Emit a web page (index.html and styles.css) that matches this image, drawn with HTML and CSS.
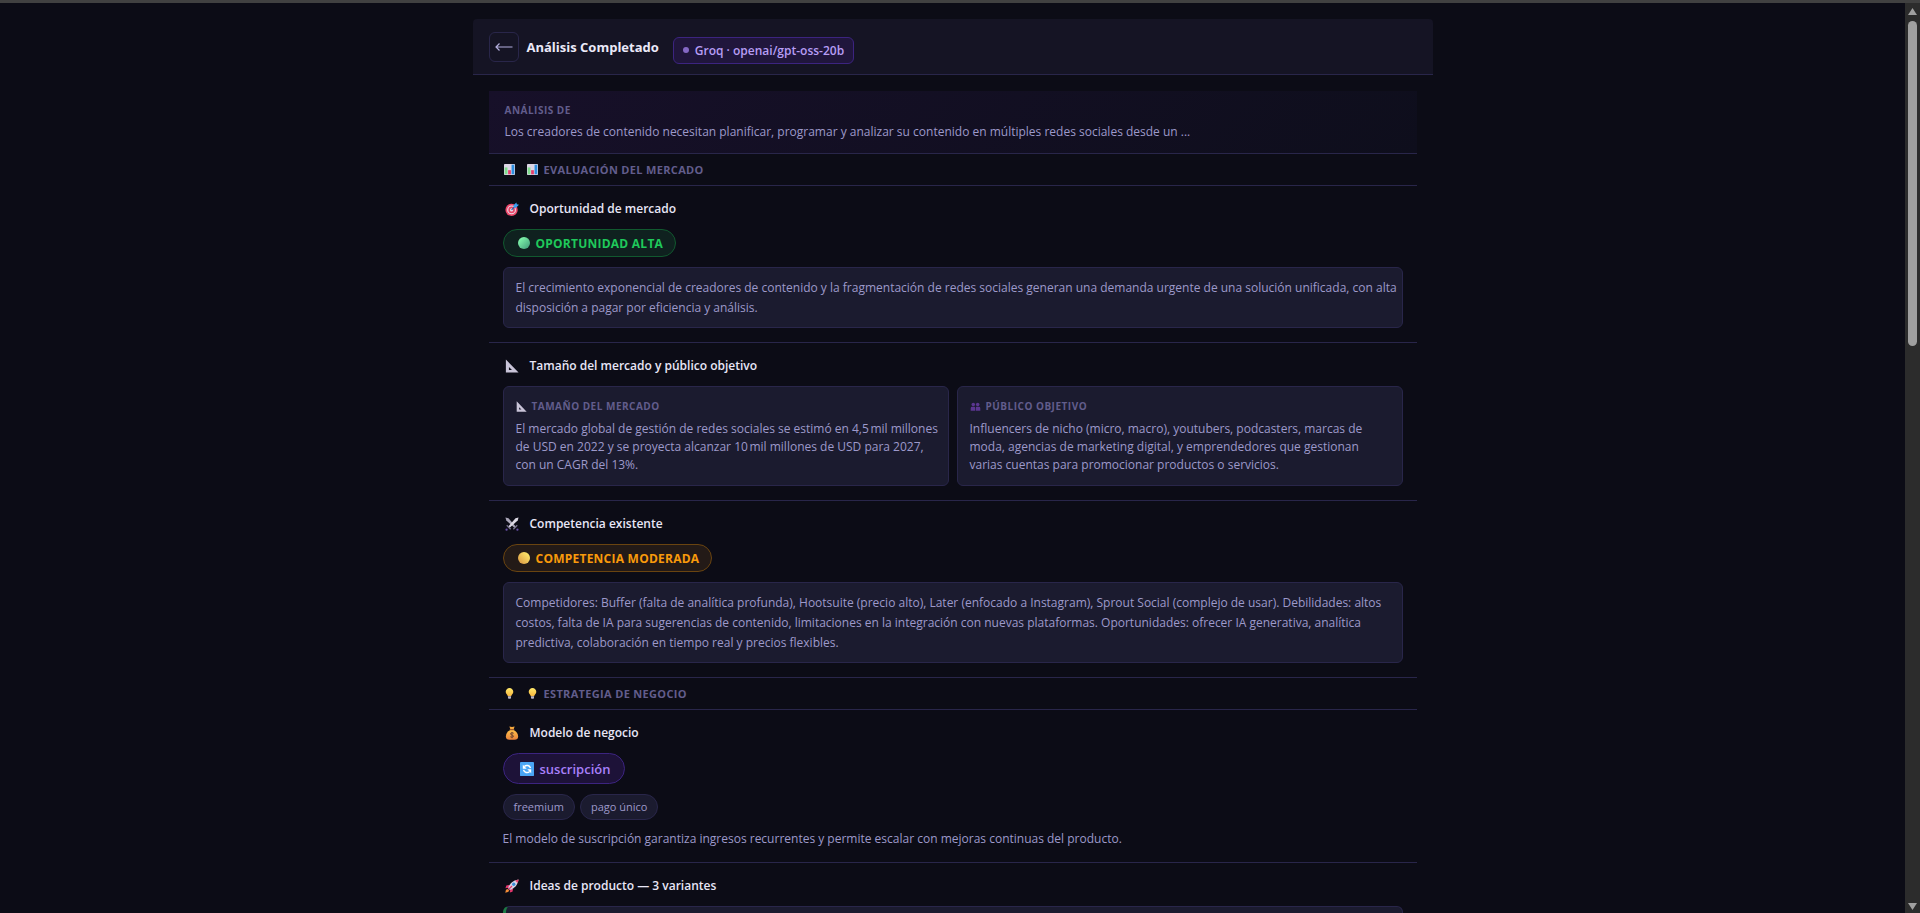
FILE: index.html
```html
<!DOCTYPE html>
<html lang="es">
<head>
  <meta charset="UTF-8" />
  <title>Análisis Completado</title>
  <meta name="viewport" content="width=device-width, initial-scale=1" />
  <link rel="stylesheet" href="styles.css">
</head>
<body>

  <!-- Icon set -->
  <svg class="icon-defs" aria-hidden="true">
    <defs>
      <linearGradient id="gGreen" x1="0" y1="0" x2="1" y2="1">
        <stop offset="0.2" stop-color="#7df0a8" />
        <stop offset="1" stop-color="#3f9a78" />
      </linearGradient>
      <linearGradient id="gYellow" x1="1" y1="0" x2="0" y2="1">
        <stop offset="0.1" stop-color="#fdea6c" />
        <stop offset="0.9" stop-color="#dc9c45" />
      </linearGradient>
      <linearGradient id="gBulb" x1="0" y1="0" x2="0" y2="1">
        <stop offset="0" stop-color="#ffe96b" />
        <stop offset="1" stop-color="#f7b53e" />
      </linearGradient>
      <linearGradient id="gBag" x1="0" y1="0" x2="0" y2="1">
        <stop offset="0" stop-color="#ffc24a" />
        <stop offset="1" stop-color="#e8823c" />
      </linearGradient>
      <symbol id="chart" viewBox="0 0 16 16">
        <rect width="16" height="16" rx="1" fill="#ddd6e6" />
        <rect x="1" y="5" width="4" height="10" fill="#7fdc8c" />
        <rect x="6" y="9" width="4" height="6" fill="#e63e6d" />
        <rect x="11" y="1" width="4" height="14" fill="#2e8fe0" />
      </symbol>
      <symbol id="target" viewBox="0 0 16 16">
        <circle cx="7.5" cy="9" r="7" fill="#ee4a6c" />
        <circle cx="7.5" cy="9" r="5" fill="#e9dbe8" />
        <circle cx="7.5" cy="9" r="3.8" fill="#e64668" />
        <circle cx="7.5" cy="9" r="1.8" fill="#e9dbe8" />
        <path d="M7.5 9 12 4.5" stroke="#1d5fb0" stroke-width="1.2" />
        <path d="M9.5 4 13 0.5 13.5 2.5 16 3 12.5 6.500 10 6Z" fill="#3aa0f2" />
      </symbol>
      <symbol id="ruler" viewBox="0 0 16 16">
        <path fill-rule="evenodd" d="M1 0.5 15.5 15.5H1ZM4.500 9V12.500H8Z" fill="#c9c4d8" />
      </symbol>
      <symbol id="people" viewBox="0 0 16 16">
        <circle cx="4.800" cy="5" r="2.600" fill="#5b3690" />
        <circle cx="11.200" cy="5" r="2.600" fill="#5b3690" />
        <path d="M1 14V10.500Q1 8.500 3 8.500H6.500Q7.500 8.500 7.500 10V14ZM8.500 14V10Q8.500 8.500 9.500 8.500H13Q15 8.500 15 10.500V14Z" fill="#5b3690" />
      </symbol>
      <symbol id="swords" viewBox="0 0 16 16">
        <path d="M0.5 0.5 4 1.500 12.500 11 11 12.500 1.500 4Z" fill="#aaa6b8" />
        <path d="M15.500 0.500 12 1.500 3.500 11 5 12.500 14.500 4Z" fill="#dcd9e4" />
        <path d="M2 9.500 6.500 14M14 9.500 9.500 14" stroke="#77728c" stroke-width="1.600" />
        <circle cx="1.800" cy="14.500" r="1.300" fill="#6950a8" />
        <circle cx="14.200" cy="14.500" r="1.300" fill="#6950a8" />
      </symbol>
      <symbol id="bulb" viewBox="0 0 16 16">
        <path d="M8 0A5.500 5.500 0 0 1 13.500 5.700C13.500 8.500 10.500 9.500 10.500 12H5.500C5.500 9.500 2.500 8.500 2.500 5.700A5.500 5.500 0 0 1 8 0Z" fill="url(#gBulb)" />
        <path d="M5.800 12h4.400v3Q8 16.500 5.800 15Z" fill="#b9b4c6" />
      </symbol>
      <symbol id="bag" viewBox="0 0 16 16">
        <path d="M5 0.500 8 1.200 11 0.500 10 3.500H6Z" fill="#f5a83e" />
        <path d="M6 4.500H10C13 6 15 9 15 12 15 14.500 13.500 15.700 11 15.700H5C2.500 15.700 1 14.500 1 12 1 9 3 6 6 4.500Z" fill="url(#gBag)" />
        <rect x="5.300" y="3.300" width="5.400" height="1.500" rx="0.700" fill="#9a5a2c" />
        <path d="M10 8.300Q8 7 6.500 8.300 5.700 9.700 8 10.300 10.300 11 9.500 12.300 8 13.500 6 12.300M8 6.800V14" fill="none" stroke="#6e4630" stroke-width="1.100" />
      </symbol>
      <symbol id="cycle" viewBox="0 0 16 16">
        <rect width="16" height="16" rx="1" fill="#4aa5f5" />
        <path d="M5 5.200A4.200 4.200 0 0 1 12 7M11 10.800A4.200 4.200 0 0 1 4 9" fill="none" stroke="#fff" stroke-width="1.700" />
        <path d="M3.200 3.200V7.700H7.700ZM12.800 12.800V8.300H8.300Z" fill="#fff" />
      </symbol>
      <symbol id="rocket" viewBox="0 0 16 16">
        <path d="M5.500 6.500 1.500 7.500 0.500 10.500 4 10ZM9.500 10.500 8.500 14.500 5.500 15.500 6 12Z" fill="#e2366c" />
        <path d="M2.500 11Q0.500 12 0.300 15.700 4 15.500 5 13.500Z" fill="#f28b35" />
        <path d="M3.500 10.500C5 5.500 9 1.500 15.500 0.500 14.500 7 10.500 11 5.500 12.500Z" fill="#d9d4e6" />
        <path d="M11.500 1.700Q13.500 0.800 15.500 0.500 15.200 2.500 14.300 4.500Z" fill="#ee3f70" />
        <circle cx="10" cy="6" r="1.900" fill="#3c8fd8" />
        <path d="M8 8 4 12" stroke="#e2366c" stroke-width="1.500" />
      </symbol>
      <symbol id="dotGreen" viewBox="0 0 16 16"><circle cx="8" cy="8" r="8" fill="url(#gGreen)" /></symbol>
      <symbol id="dotYellow" viewBox="0 0 16 16"><circle cx="8" cy="8" r="8" fill="url(#gYellow)" /></symbol>
    </defs>
  </svg>

  <div class="window">
    <div class="viewport">
      <div class="page">

        <header class="top-bar">
          <button class="back-btn" aria-label="Volver">
            <svg width="18" height="10" viewBox="0 0 18 10"><path d="M17.500 5H1M4.500 1.500 1 5 4.500 8.500" fill="none" stroke="currentColor" stroke-width="1.200" /></svg>
          </button>
          <h1>Análisis Completado</h1>
          <span class="model-badge"><span class="model-dot"></span>Groq · openai/gpt-oss-20b</span>
        </header>

        <main class="results">
          <div class="summary">
            <div class="label">Análisis de</div>
            <p class="text">Los creadores de contenido necesitan planificar, programar y analizar su contenido en múltiples redes sociales desde un ...</p>
          </div>

          <h2 class="group-title">
            <svg class="icon-sm"><use href="#chart" /></svg>
            <span><svg class="icon-sm"><use href="#chart" /></svg>Evaluación del mercado</span>
          </h2>

          <section class="block">
            <h3><svg class="icon-md"><use href="#target" /></svg>Oportunidad de mercado</h3>
            <div class="pill pill-green"><svg class="icon-dot"><use href="#dotGreen" /></svg>OPORTUNIDAD ALTA</div>
            <p class="box text">El crecimiento exponencial de creadores de contenido y la fragmentación de redes sociales generan una demanda urgente de una solución unificada, con alta disposición a pagar por eficiencia y análisis.</p>
          </section>

          <section class="block">
            <h3><svg class="icon-md"><use href="#ruler" /></svg>Tamaño del mercado y público objetivo</h3>
            <div class="cards">
              <div class="card">
                <div class="label"><svg class="icon-sm"><use href="#ruler" /></svg>Tamaño del mercado</div>
                <p class="text">El mercado global de gestión de redes sociales se estimó en 4,5&#8239;mil millones de USD en 2022 y se proyecta alcanzar 10&#8239;mil millones de USD para 2027, con un CAGR del 13%.</p>
              </div>
              <div class="card">
                <div class="label"><svg class="icon-sm"><use href="#people" /></svg>Público objetivo</div>
                <p class="text">Influencers de nicho (micro, macro), youtubers, podcasters, marcas de<br>moda, agencias de marketing digital, y emprendedores que gestionan<br>varias cuentas para promocionar productos o servicios.</p>
              </div>
            </div>
          </section>

          <section class="block">
            <h3><svg class="icon-md"><use href="#swords" /></svg>Competencia existente</h3>
            <div class="pill pill-orange"><svg class="icon-dot"><use href="#dotYellow" /></svg>COMPETENCIA MODERADA</div>
            <p class="box text">Competidores: Buffer (falta de analítica profunda), Hootsuite (precio alto), Later (enfocado a Instagram), Sprout Social (complejo de usar). Debilidades: altos costos, falta de IA para sugerencias de contenido, limitaciones en la integración con nuevas plataformas. Oportunidades: ofrecer IA generativa, analítica predictiva, colaboración en tiempo real y precios flexibles.</p>
          </section>

          <h2 class="group-title">
            <svg class="icon-sm"><use href="#bulb" /></svg>
            <span><svg class="icon-sm"><use href="#bulb" /></svg>Estrategia de negocio</span>
          </h2>

          <section class="block">
            <h3><svg class="icon-md"><use href="#bag" /></svg>Modelo de negocio</h3>
            <div class="pill pill-purple"><svg class="icon-md"><use href="#cycle" /></svg>suscripción</div>
            <div class="tags">
              <span class="tag">freemium</span>
              <span class="tag">pago único</span>
            </div>
            <p class="note">El modelo de suscripción garantiza ingresos recurrentes y permite escalar con mejoras continuas del producto.</p>
          </section>

          <section class="block">
            <h3><svg class="icon-md"><use href="#rocket" /></svg>Ideas de producto — 3 variantes</h3>
            <div class="idea"></div>
          </section>
        </main>

      </div>
    </div>

    <div class="scrollbar" aria-hidden="true">
      <svg width="9" height="7" viewBox="0 0 9 7"><path d="M4.500 0 9 7H0Z" fill="#a0a0a0" /></svg>
      <div class="thumb"></div>
      <svg class="arrow-down" width="9" height="7" viewBox="0 0 9 7"><path d="M0 0H9L4.500 7Z" fill="#a0a0a0" /></svg>
    </div>
  </div>

</body>
</html>
```
FILE: styles.css
```css
* {
  box-sizing: border-box;
}

body {
  margin: 0;
  height: 100vh;
  overflow: hidden;
  background: #0c0c16;
  color: #9d99ca;
  font-family: 'Segoe UI', 'Open Sans', 'Noto Sans', sans-serif;
  font-size: 12px;
}

h1, h2, h3, p {
  margin: 0;
}

.icon-defs {
  position: absolute;
  width: 0;
  height: 0;
}

.window {
  display: flex;
  height: 100vh;
  border-top: 3px solid #414141;
}

.viewport {
  flex: 1;
  overflow: hidden;
  padding: 16px;
}

.page {
  max-width: 960px;
  margin: 0 auto;
}

/* Header */
.top-bar {
  display: flex;
  align-items: center;
  padding: 12px 16px;
  height: 56px;
  background: #151424;
  border-bottom: 1px solid #29264a;
  border-radius: 4px 4px 0 0;
}

.back-btn {
  display: flex;
  align-items: center;
  justify-content: center;
  width: 30px;
  height: 30px;
  padding: 0;
  background: transparent;
  border: 1px solid #29264a;
  border-radius: 6px;
  color: #b3aedd;
  cursor: pointer;
}

h1 {
  margin-left: 8px;
  font-size: 13px;
  line-height: 20px;
  font-weight: 700;
  color: #ebe9f8;
}

.model-badge {
  display: flex;
  align-items: center;
  gap: 6px;
  height: 27px;
  margin: 7px 0 0 14px;
  padding: 0 9px;
  background: #20163c;
  border: 1px solid #3c2480;
  border-radius: 6px;
  font-size: 12px;
  font-weight: 600;
  color: #b79df5;
}

.model-dot {
  width: 6px;
  height: 6px;
  border-radius: 50%;
  background: #8468c4;
}

/* Results */
.results {
  padding: 16px 16px 0;
}

.text {
  font-size: 12px;
  line-height: 20px;
}

.label {
  display: flex;
  align-items: center;
  gap: 5px;
  font-size: 10px;
  line-height: 16px;
  font-weight: 700;
  letter-spacing: 0.05em;
  text-transform: uppercase;
  color: #625d8c;
}

.summary {
  padding: 11px 16px;
  height: 63px;
  background: linear-gradient(135deg, #171029, #0e0e1c);
  border-bottom: 1px solid #29264a;
}

.summary .text {
  margin-top: 4px;
}

.group-title {
  display: flex;
  align-items: center;
  gap: 12px;
  height: 32px;
  padding: 0 15px 1px;
  border-bottom: 1px solid #29264a;
  font-size: 11px;
  font-weight: 700;
  letter-spacing: 0.03em;
  text-transform: uppercase;
  color: #625d8c;
}

.group-title span {
  display: flex;
  align-items: center;
  gap: 6px;
}

.icon-sm {
  width: 11px;
  height: 11px;
}

.icon-md {
  width: 14px;
  height: 14px;
}

.icon-dot {
  width: 12px;
  height: 12px;
}

.block {
  padding: 14px;
  border-bottom: 1px solid #29264a;
}

h3 {
  display: flex;
  align-items: center;
  gap: 11px;
  margin-bottom: 11px;
  padding-left: 2px;
  font-size: 12px;
  line-height: 18px;
  font-weight: 600;
  color: #e8e6f6;
}

.pill {
  display: flex;
  align-items: center;
  gap: 6px;
  width: fit-content;
  height: 28px;
  margin-bottom: 10px;
  padding: 0 12px 0 14px;
  border: 1px solid;
  border-radius: 16px;
  font-size: 12px;
  font-weight: 700;
  letter-spacing: 0.02em;
}

.pill-green {
  background: #0f211f;
  border-color: #11592f;
  color: #1fc95b;
}

.pill-orange {
  background: #231a17;
  border-color: #6a4410;
  color: #f99a0b;
}

.pill-purple {
  height: 31px;
  padding: 0 14px 0 16px;
  background: #1d1238;
  border-color: #3c2480;
  font-size: 13px;
  font-weight: 600;
  letter-spacing: normal;
  color: #a880fa;
}

.box {
  padding: 10px 3px 9px 12px;
  background: #1b1b2f;
  border: 1px solid #29264a;
  border-radius: 6px;
}

.cards {
  display: grid;
  grid-template-columns: 1fr 1fr;
  gap: 8px;
}

.card {
  padding: 11px 2px 11px 12px;
  background: #1b1b2f;
  border: 1px solid #29264a;
  border-radius: 6px;
}

.card .text {
  margin-top: 6px;
  line-height: 18px;
}

.tags {
  display: flex;
  gap: 5px;
  margin-bottom: 10px;
}

.tag {
  padding: 0 10px;
  background: #1b1b2f;
  border: 1px solid #29264a;
  border-radius: 13px;
  font-size: 11px;
  line-height: 24px;
}

.note {
  line-height: 18px;
}

.idea {
  height: 120px;
  background: #1b1b2f;
  border: 1px solid #29264a;
  border-left: 3px solid #1c7a45;
  border-radius: 6px;
}

/* Scrollbar */
.scrollbar {
  display: flex;
  flex-direction: column;
  align-items: center;
  width: 15px;
  padding: 5px 0 3px;
  background: #2c2c2c;
}

.thumb {
  width: 9px;
  height: 36%;
  margin-top: 6px;
  background: #9f9f9f;
  border-radius: 5px;
}

.arrow-down {
  margin-top: auto;
}
```
